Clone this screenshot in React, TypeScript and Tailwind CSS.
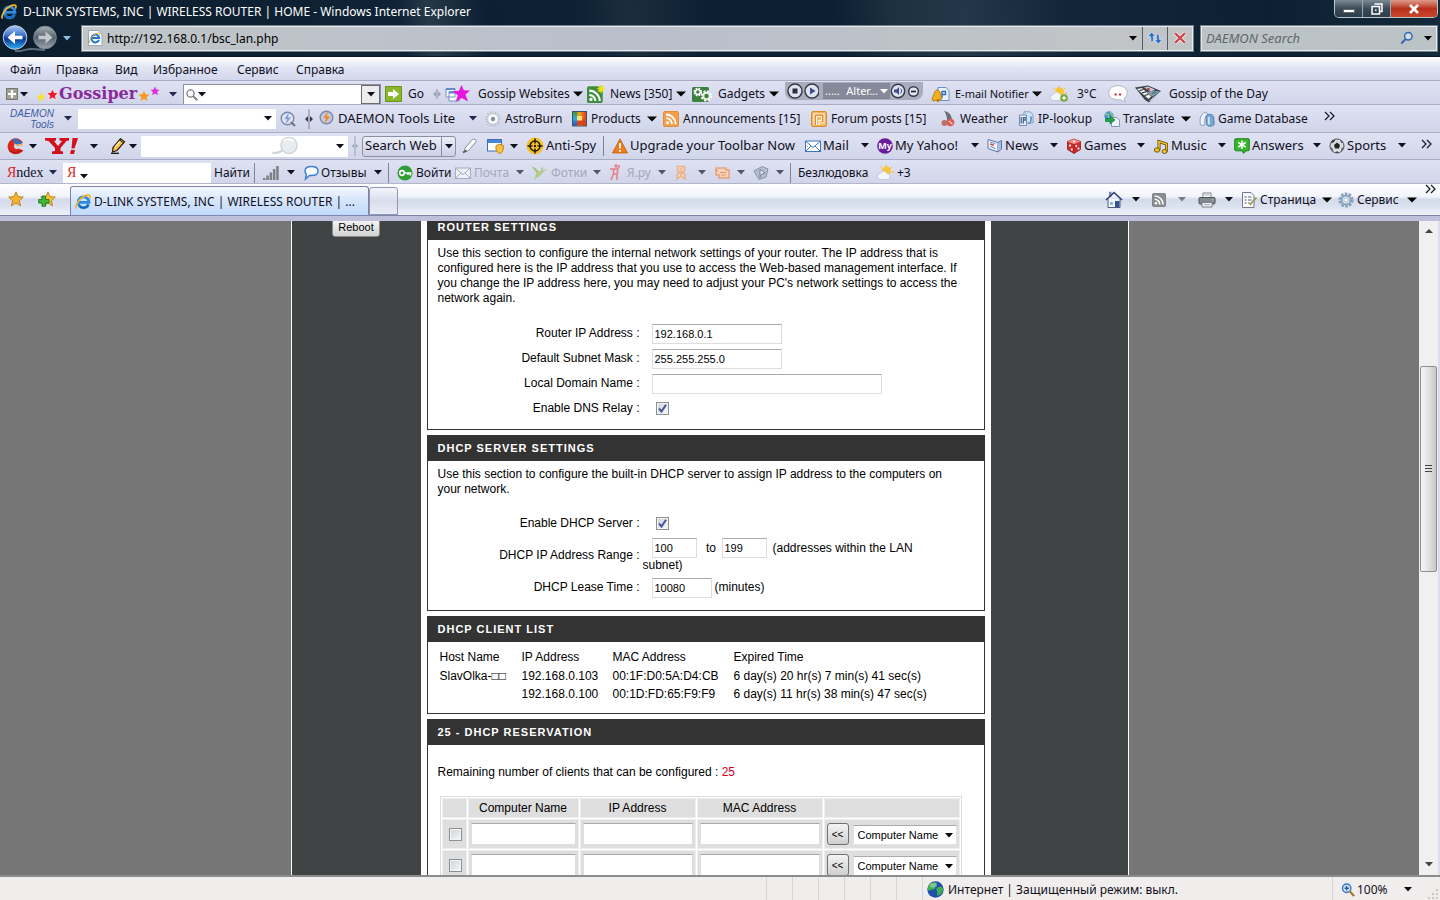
import type { ReactNode } from "react";

type Box = { c?: string; children?: ReactNode };

const star = "M8 0.8 10.1 5.6 15.3 6.1 11.4 9.6 12.6 14.8 8 12.1 3.4 14.8 4.6 9.6 0.7 6.1 5.9 5.6Z";

/* ---------- small building blocks ---------- */

function Caret({ c = "" }: { c?: string }) {
  return (
    <svg className={`h-[5px] w-2 shrink-0 ${c}`} viewBox="0 0 8 5" aria-hidden="true">
      <path d="M0 0H8L4 4.6Z" fill="currentColor" />
    </svg>
  );
}

function WideCaret({ c = "" }: { c?: string }) {
  return (
    <svg className={`h-1.5 w-2.5 shrink-0 ${c}`} viewBox="0 0 10 6" aria-hidden="true">
      <path d="M0 0.5H10L5 5.6Z" fill="#000" />
    </svg>
  );
}

function Item({ c = "", children }: Box) {
  return <button type="button" className={`flex shrink-0 items-center whitespace-nowrap ${c}`}>{children}</button>;
}

function Slot({ c = "", children }: Box) {
  return <span className={`flex shrink-0 items-center ${c}`}>{children}</span>;
}

function Sep() {
  return <span className="h-5 w-px shrink-0 bg-[#7d8296]" />;
}

function More({ c = "" }: { c?: string }) {
  return (
    <button type="button" aria-label="More" className={`shrink-0 ${c}`}>
      <svg className="h-2.5 w-[11px]" viewBox="0 0 11 10" fill="none" aria-hidden="true">
        <path d="M1 1 5 5 1 9M6 1 10 5 6 9" stroke="#1c1e2c" strokeWidth="1.3" />
      </svg>
    </button>
  );
}

function Icon({ c = "h-4 w-4", box = "0 0 16 16", children }: Box & { box?: string }) {
  return (
    <svg className={`shrink-0 ${c}`} viewBox={box} fill="none" aria-hidden="true">
      {children}
    </svg>
  );
}

/* ---------- icons ---------- */

function IeLogo({ c = "h-4 w-4" }: { c?: string }) {
  return (
    <Icon c={c}>
      <path d="M13.6 10.4A5.4 5.4 0 1 1 14 8.3H4.6" stroke="#2b8be0" strokeWidth="2.8" />
      <path d="M13.4 10.4A5.4 5.4 0 0 1 4 11.5" stroke="#1660b8" strokeWidth="1.4" />
      <path d="M1.6 14.6C-0.8 11.4 5.6 2.6 12 1.2 15 0.6 15.6 2.2 14.4 4.6" stroke="#f0b429" strokeWidth="1.7" />
    </Icon>
  );
}

function PageIe() {
  return (
    <Icon>
      <path d="M1.5 0.5H11L15 4V15.5H1.5Z" fill="#fff" stroke="#9aa7b5" />
      <path d="M12 9.8A3.9 3.9 0 1 1 12.2 8.1H5" stroke="#1f79d4" strokeWidth="2" />
      <path d="M2.6 13C1.6 10 6 4.2 11 3.2c2-.3 2 .8 1.4 2" stroke="#e8ab28" />
    </Icon>
  );
}

function NavButtons() {
  return (
    <svg className="h-7 w-14 shrink-0" viewBox="0 0 56 28" aria-hidden="true">
      <defs>
        <linearGradient id="back" x1="0" y1="0" x2="0" y2="1">
          <stop offset="0" stopColor="#a9c8f2" />
          <stop offset=".4" stopColor="#3f74cc" />
          <stop offset=".55" stopColor="#0a3490" />
          <stop offset="1" stopColor="#2fb4fa" />
        </linearGradient>
        <linearGradient id="fwd" x1="0" y1="0" x2="0" y2="1">
          <stop offset="0" stopColor="#a8afb6" />
          <stop offset=".5" stopColor="#59636d" />
          <stop offset="1" stopColor="#9aa3ab" />
        </linearGradient>
      </defs>
      <path d="M14 27C22 28 26 24 32 25L44 26" stroke="#5f6f7f" strokeWidth="2" fill="none" />
      <circle cx="14" cy="13.5" r="11.8" fill="url(#back)" stroke="#c3d2e4" />
      <circle cx="44" cy="13.5" r="11.3" fill="url(#fwd)" stroke="#7d8a96" />
      <path d="M6.5 13.500 14 7V11.800H21.500V15.200H14V20Z" fill="#fff" />
      <path d="M51.500 13.500 44.500 7.500V11.800H37.500V15.200H44.500V19.500Z" fill="#c3c9ce" />
    </svg>
  );
}

function Star({ fill, edge = "none", c = "h-4 w-4" }: { fill: string; edge?: string; c?: string }) {
  return (
    <Icon c={c}>
      <path d={star} fill={fill} stroke={edge} strokeWidth=".8" />
    </Icon>
  );
}

function Rss({ from, line = "#fff", c = "h-4 w-4" }: { from: string; line?: string; c?: string }) {
  return (
    <Icon c={c}>
      <rect x=".5" y=".5" width="15" height="15" rx="1.5" fill={from} stroke={line} />
      <circle cx="4.5" cy="11.7" r="1.5" fill="#fff" />
      <path d="M3 7.200A6 6 0 0 1 9 13.200M3 3.500A9.700 9.700 0 0 1 12.700 13.200" stroke="#fff" strokeWidth="1.8" />
    </Icon>
  );
}

function Envelope({ c = "h-4 w-4", tone = "#3b74c4", fill = "#fff" }: { c?: string; tone?: string; fill?: string }) {
  return (
    <Icon c={c}>
      <rect x=".5" y="3" width="15" height="10.5" fill={fill} stroke={tone} />
      <path d="M1 3.500 8 9.500 15 3.500M1 13 6 8M15 13 10 8" stroke={tone} />
    </Icon>
  );
}

function Lens({ color, c = "h-4 w-4" }: { color: string; c?: string }) {
  return (
    <Icon c={c}>
      <circle cx="9.5" cy="6" r="4.3" fill="#ffffff66" stroke={color} strokeWidth="1.6" />
      <path d="M6.300 9.300 1.500 14.300" stroke={color} strokeWidth="2.2" />
    </Icon>
  );
}

function GossipCards() {
  return (
    <Icon c="h-[18px] w-[26px]" box="0 0 26 18">
      <path d="M1 3.500H10V12H1Z M4 6.500H14V16H4Z" fill="#fff" stroke="#6f93c8" />
      <path d="M1 3.500H10V5H1Z M4 6.500H14V8.500H4Z" fill="#5c88c9" />
      <path d="M16.500 0 18.800 5.200 25 5.500 20.500 9.600 23 16.500 16.800 13 10.500 17 12.800 10.400 8 6.200 14 5.800Z" fill="#e815e0" />
    </Icon>
  );
}

function GreenNews() {
  return (
    <Icon c="h-[18px] w-[18px]">
      <rect y="1" width="14" height="15" rx="1.5" fill="#3d8f3d" />
      <circle cx="3.5" cy="12.8" r="1.5" fill="#fff" />
      <path d="M2 8.800a5.500 5.500 0 0 1 5.500 5.500M2 5a9.300 9.300 0 0 1 9.300 9.300" stroke="#fff" strokeWidth="1.8" />
      <path d="M12.500 0v7M9 3.500h7M10 1l5 5M15 1l-5 5" stroke="#f4e51c" strokeWidth="1.2" />
    </Icon>
  );
}

function Gadgets() {
  return (
    <Icon c="h-[17px] w-[21px]" box="0 0 21 17">
      <rect x="0" y="1" width="17" height="15" rx="1.5" fill="#3c8040" />
      <circle cx="5.8" cy="6" r="3.3" stroke="#fff" strokeWidth="2" strokeDasharray="1.7 .9" />
      <circle cx="5.8" cy="6" r="2.4" stroke="#fff" strokeWidth="1.4" />
      <circle cx="14.5" cy="10" r="4.7" stroke="#f4f8f0" strokeWidth="2.2" strokeDasharray="2.200 1.500" />
      <circle cx="14.5" cy="10" r="3.2" stroke="#e8f0e2" strokeWidth="2" />
    </Icon>
  );
}

function Bell() {
  return (
    <Icon c="h-[17px] w-[19px]" box="0 0 19 17">
      <path d="M7 1.500H15L18 4.500V14.500H7Z" fill="#e9f1fb" stroke="#6b8fc4" />
      <path d="M11 5v7M11 5.500h3.500v3H11" stroke="#3565ad" strokeWidth="1.3" />
      <path d="M1 12C4 10 2 5 6 4 10 4 9 9 11 13L2 15Z" fill="#f2b01e" stroke="#a86e07" strokeWidth=".8" />
      <circle cx="7" cy="14.5" r="1.5" fill="#c27c05" />
    </Icon>
  );
}

function SunCloud({ add = false }: { add?: boolean }) {
  return (
    <Icon c="h-4 w-[18px]" box="0 0 18 16">
      <circle cx="9.5" cy="6" r="4.5" fill="#fbc531" />
      <path d="M9 0v2M3.500 2l1.600 1.500M15 2l-1.500 1.500M17 7h-2" stroke="#f5b417" />
      <path d="M3.500 14.500a3 3 0 0 1 0-6C4.500 5.500 9 5.500 9.800 8.500c4-.4 4.500 6 .4 6Z" fill="#f3f6fb" stroke="#b9c3d2" strokeWidth=".8" />
      {add && (
        <>
          <circle cx="14" cy="12" r="3.8" fill="#6aa62c" />
          <path d="M14 9.800v4.400M11.800 12h4.400" stroke="#fff" strokeWidth="1.3" />
        </>
      )}
    </Icon>
  );
}

function ChatBubble() {
  return (
    <Icon c="h-[18px] w-5" box="0 0 20 18">
      <path d="M10 .7c5.300 0 9.200 3 9.200 7 0 2.600-1.400 4.600-3.200 5.700l1.500 3.800-5-2.500C5 15.600.8 12.300.8 7.700c0-4 3.900-7 9.200-7Z" fill="#fff" stroke="#aeb6c4" />
      <path d="M6.500 8.500h2.200v2H6.500ZM11 8.500h2.200v2H11Z" fill="#cf3038" />
    </Icon>
  );
}

function PaperStack() {
  return (
    <Icon c="h-[18px] w-7" box="0 0 28 18">
      <path d="M1 2.500 14 .5 27 6 15 17.500 11 15Z" fill="#3d424a" />
      <path d="M3 4 8 3 17 11.500 14.500 14Z" fill="#eef0f4" />
      <path d="M10 2.500 14 1.500 21 4.500 17 6.500Z" fill="#c9ced8" />
      <path d="M13 7 19 5.500 26 6.500 18 12Z" fill="#8f99a8" />
      <path d="M5.500 5.500l4-1M8 8l4-1.200M10.500 10.500l4-1.200" stroke="#222" />
      <path d="M13 3.500l3 1" stroke="#ca3434" strokeWidth="1.5" />
      <path d="M18 8.500l4-1.500" stroke="#2e8f86" strokeWidth="1.5" />
      <path d="M26 7.500 15.500 16" stroke="#dfe3e8" />
    </Icon>
  );
}

function Bolt({ lens = false }: { lens?: boolean }) {
  return (
    <Icon>
      <circle cx="7.5" cy="7.5" r="6.3" fill={lens ? "#dbe3f2" : "#c5c4dd"} stroke="#7c89ad" strokeWidth="1.4" />
      <path d="M8.800 1.500 4.500 8H7L5.500 13.500 11 6.500H8Z" fill={lens ? "#7f9fd6" : "#f18a1b"} />
      {lens && <path d="M11 11 15 15" stroke="#6c7686" strokeWidth="2.2" />}
    </Icon>
  );
}

function Burst() {
  return (
    <Icon>
      <path d="M8 0v16M0 8h16M2.300 2.300l11.400 11.400M13.700 2.300 2.300 13.700M5 .8l6 14.400M11 .8 5 15.200M.8 5l14.400 6M15.200 5 .8 11" stroke="#b4b8c4" strokeWidth="1.1" />
      <circle cx="8" cy="8" r="4.8" fill="#fff" stroke="#dfe2ea" />
      <circle cx="8" cy="8" r="2.3" fill="#8b93a2" />
    </Icon>
  );
}

function ProductsIcon() {
  return (
    <svg className="h-4 w-[15px] shrink-0" viewBox="0 0 15 16" aria-hidden="true">
      <defs>
        <linearGradient id="prodTop" x1="0" y1="0" x2="1" y2="0">
          <stop offset="0" stopColor="#3f9a3a" />
          <stop offset=".5" stopColor="#f3a31c" />
          <stop offset="1" stopColor="#d8361a" />
        </linearGradient>
        <linearGradient id="prodSide" x1="0" y1="0" x2="0" y2="1">
          <stop offset="0" stopColor="#3f9a3a" />
          <stop offset=".5" stopColor="#35a8d8" />
          <stop offset="1" stopColor="#2453b4" />
        </linearGradient>
      </defs>
      <rect x=".5" y=".5" width="14" height="14.5" fill="url(#prodTop)" stroke="#39537a" />
      <rect x="1" y="1" width="4" height="13.500" fill="url(#prodSide)" />
      <path d="M5 8.500H14V14.500H5Z" fill="#d8421c" />
      <path d="M5 5H10V9.500H5Z" fill="#fbe27a" />
    </svg>
  );
}

function ForumIcon() {
  return (
    <Icon>
      <rect x=".5" y=".5" width="15" height="15" rx="1.5" fill="#f6b565" stroke="#dd8a28" />
      <path d="M3 14V3H13V12H9M5.500 14V5.500H10.500V9.500H8V14" stroke="#fff4e2" strokeWidth="1.2" />
      <path d="M4.300 14V4.200H11.800V10.800" stroke="#d8791c" strokeWidth=".9" />
    </Icon>
  );
}

function ForecastIcon() {
  return (
    <Icon c="h-4 w-[15px]" box="0 0 15 16">
      <path d="M4 0C10 1 12 5 12 10L6 14C8 9 7 4 4 0Z" fill="#6a6d78" />
      <circle cx="4.5" cy="12" r="3" fill="#b8736e" />
      <circle cx="10.5" cy="11.5" r="3.8" fill="#dd5a52" />
      <path d="M9 9.800l3.500 3.500" stroke="#f6d8d6" strokeWidth="1.2" />
    </Icon>
  );
}

function IpIcon() {
  return (
    <Icon>
      <path d="M6 .8h6l3 2.700V12H6Z" fill="#cfe0f4" stroke="#7ea0cb" />
      <path d="M1.500 4H8.500V14.500H1.500Z" fill="#e6edf7" stroke="#6f8db5" />
      <path d="M3.200 6V12.500M5.300 12.500V6.500H7.200V9.200H5.300" stroke="#3f5e88" strokeWidth="1.200" />
      <path d="M12.500 5.500C14 8 13 11 10.500 13" stroke="#5c86c0" strokeWidth="1.500" />
    </Icon>
  );
}

function TranslateIcon() {
  return (
    <Icon>
      <circle cx="5" cy="5" r="4.7" fill="#4b90d8" />
      <path d="M1 3.500C4 2 6 5 4.500 9M6 .8C9 3 8 6 9.500 7" stroke="#8fd078" strokeWidth="1.5" />
      <path d="M7.500 6.500H13L15.500 9V15.500H7.500Z" fill="#eef3fa" stroke="#8298b8" />
      <path d="M1.500 7.500H6V5L11 9 6 13V10.500H1.500Z" fill="#1fa050" stroke="#0a6e30" strokeWidth=".6" />
    </Icon>
  );
}

function GameDbIcon() {
  return (
    <Icon>
      <path d="M2 14.500C-.5 9 2 2 7 1l2 3C6 5 5 10 6 14Z" fill="#eef2f8" stroke="#8b9ebb" />
      <path d="M7 5.500C7 2.500 13.500 2.500 14.500 5.500L15.200 13.500C13 15.700 9 15.700 7.500 13.500Z" fill="#7aa7d2" stroke="#4e7fae" />
      <path d="M9.800 6V13.500" stroke="#d4e6f6" strokeWidth="1.8" />
    </Icon>
  );
}

function Cleaner() {
  return (
    <Icon c="h-[18px] w-[18px]" box="0 0 18 18">
      <path d="M16 5.500C13 1 8 0 4.500 2.500-.5 6-.5 12.500 3.500 15.500 7.500 18.500 13 17.500 16.500 13.500L11.500 11.500C9 13 6.800 11.500 7 9 7.200 6.500 9 6 11 7Z" fill="#d9271d" />
      <path d="M5 2.300C9 .5 12 3 16 6L9.500 8.500C8 6 6 5 5 2.300Z" fill="#356fb5" />
      <path d="M3 5.500C6 6 9 7.500 10.500 9.500L16 8.500V6.500L11 7.500Z" fill="#f2b36a" />
      <path d="M2 13.500C6 16 10 16 15 13.500" stroke="#8f1410" />
    </Icon>
  );
}

function Pencil() {
  return (
    <Icon>
      <path d="M10.500 .8 14.500 3.800 7 12.500 2.500 14 3 9.500Z" fill="#f6c04c" stroke="#2a1c08" strokeWidth="1.200" />
      <path d="M5 9 10 3.200" stroke="#fff0c8" strokeWidth="1.200" />
      <path d="M9.500 2 13.500 5" stroke="#2a1c08" />
      <path d="M1 15.300H9" stroke="#111" strokeWidth="1.3" />
    </Icon>
  );
}

function Marker() {
  return (
    <Icon c="h-4 w-[15px]" box="0 0 15 16">
      <path d="M13 1.500C15 2.500 14 4 13 5L6.500 12.500 2.500 14 3 10 9.500 2.500C10.500 1.300 12 .8 13 1.500Z" fill="#fbfbfd" stroke="#878b98" />
      <path d="M1 14.500 4.500 12.500" stroke="#555" strokeWidth="1.8" />
    </Icon>
  );
}

function ShieldWindow() {
  return (
    <Icon c="h-4 w-[17px]" box="0 0 17 16">
      <rect x=".5" y="1.5" width="14" height="11.5" fill="#fff" stroke="#3d6fba" />
      <path d="M1 2H14V5H1Z" fill="#4b86d6" />
      <path d="M9 7.500 12.700 6.300 16.300 7.500V11C16 13.500 14.500 14.800 12.700 15.500 10.800 14.800 9.200 13.500 9 11Z" fill="#f6c042" stroke="#c48410" />
    </Icon>
  );
}

function Target() {
  return (
    <Icon c="h-[18px] w-[18px]" box="0 0 18 18">
      <circle cx="9" cy="9" r="8.5" fill="#f5c22b" />
      <circle cx="9" cy="9" r="5" stroke="#241c05" strokeWidth="1.5" />
      <path d="M9 1.500v5M9 11.500v5M1.500 9h5M11.500 9h5" stroke="#241c05" strokeWidth="1.5" />
      <circle cx="9" cy="9" r="1.2" fill="#241c05" />
    </Icon>
  );
}

function Warning() {
  return (
    <Icon>
      <path d="M8 .8 15.500 15H.5Z" fill="#ea7d19" stroke="#c55d0a" strokeWidth=".8" />
      <path d="M8 5v5.500M8 12v1.800" stroke="#fff" strokeWidth="1.8" />
    </Icon>
  );
}

function MyBadge() {
  return (
    <svg className="h-4 w-4 shrink-0" viewBox="0 0 16 16" aria-hidden="true">
      <circle cx="8" cy="8" r="7.800" fill="#6b1c9c" />
      <text x="8" y="11" textAnchor="middle" fontSize="9" fontWeight="700" fontFamily="Noto Sans, sans-serif" fill="#fff">My</text>
    </svg>
  );
}

function NewsSheet() {
  return (
    <Icon>
      <path d="M1 1.500 11 4.500V14L1 10.500Z" fill="#f3f6fc" stroke="#5873ab" />
      <path d="M11 4.500 14.500 2.500V11L11 14" fill="#a9bfe6" stroke="#5873ab" />
      <path d="M3 4l5.500 1.700M3 8.500l5.500 2" stroke="#7a90bd" />
      <path d="M3 6l4 1.300" stroke="#c65050" strokeWidth="1.5" />
    </Icon>
  );
}

function Dice() {
  return (
    <Icon>
      <path d="M8 1 14.500 3.500V11.500L8 15.500 1.500 11.500V3.500Z" fill="#cf2f2f" stroke="#8e1919" strokeWidth=".8" />
      <path d="M8 1 14.500 3.500 8 6 1.500 3.500Z" fill="#f08d86" />
      <path d="M8 6V15.500" stroke="#8e1919" strokeWidth=".8" />
      <circle cx="4" cy="7.5" r="1.1" fill="#fff" />
      <circle cx="5.8" cy="11.5" r="1.1" fill="#fff" />
      <circle cx="10.2" cy="8" r="1" fill="#fff" />
      <circle cx="12.5" cy="10.5" r="1" fill="#fff" />
      <circle cx="8" cy="3.5" r="1.1" fill="#fff" />
    </Icon>
  );
}

function Note() {
  return (
    <Icon>
      <path d="M6 12V3.500L13.500 6V13.500" stroke="#5b4300" strokeWidth="3" />
      <path d="M6 12V3.500L13.500 6V13.500" stroke="#f0c22c" strokeWidth="1.6" />
      <ellipse cx="4" cy="12" rx="2.7" ry="2.2" fill="#f0c22c" stroke="#5b4300" strokeWidth=".8" />
      <ellipse cx="11.5" cy="13.5" rx="2.5" ry="2" fill="#f0c22c" stroke="#5b4300" strokeWidth=".8" />
    </Icon>
  );
}

function AnswersIcon() {
  return (
    <Icon>
      <path d="M2 .7H14A1.300 1.300 0 0 1 15.300 2V11.500A1.300 1.300 0 0 1 14 12.800H12L9.500 15.500 8.500 12.800H2A1.300 1.300 0 0 1 .7 11.500V2A1.300 1.300 0 0 1 2 .7Z" fill="#38b52c" stroke="#1e8416" />
      <path d="M8 2.500v8.500M4.300 4.500l7.400 4.500M11.700 4.500 4.300 9" stroke="#fff" strokeWidth="1.5" />
    </Icon>
  );
}

function Ball() {
  return (
    <Icon>
      <circle cx="8" cy="8" r="7" fill="#d9dbe0" stroke="#4f5157" />
      <path d="M8 4.500 11 7 10 10.500H6L5 7Z" fill="#222" />
      <path d="M3 2.500 6.500 1.500 5 4 2 5.500ZM11 1.500 14 4.500 12.500 5ZM1.300 9 3.500 10.500 4 13.500ZM14.700 9 12.500 10.500 12 13.500ZM6.500 14.800 8 13 9.500 14.800Z" fill="#333" />
    </Icon>
  );
}

function SignalBars() {
  return (
    <Icon>
      <path d="M0 13h2.500v2H0ZM3.300 10.500h2.500V15H3.300ZM6.600 7.500h2.500V15H6.600ZM9.900 4h2.500v11H9.900ZM13.200 1h2.500v14h-2.500Z" fill="#7e8087" />
    </Icon>
  );
}

function Speech() {
  return (
    <Icon>
      <path d="M8.500 1.500c4 0 6.500 1.700 6.500 4.500s-2.500 4.600-6.500 4.600c-.8 0-1.500 0-2-.2L2.500 14l.8-4.800C2.300 8.400 2 7.200 2 6c0-2.800 2.500-4.500 6.500-4.500Z" fill="#f7fbff" stroke="#3f7fd6" strokeWidth="1.5" />
    </Icon>
  );
}

function KeyBadge() {
  return (
    <Icon>
      <circle cx="8" cy="8" r="7.6" fill="#2f9e37" />
      <circle cx="5" cy="8" r="2.3" stroke="#fff" strokeWidth="1.7" />
      <path d="M7.500 8H13.500V10.500M11 8V10" stroke="#fff" strokeWidth="1.7" />
    </Icon>
  );
}

function Hummingbird() {
  return (
    <Icon>
      <path d="M0 1.500 3.500 3 7 6.500 15.500 3.500 11 7.500 8 11 5 12.500 1.500 15 3.500 11 4 7.500Z" fill="#a9cf8a" />
      <path d="M6 6.500 10 6 7 10Z" fill="#e8b48c" />
      <path d="M1 2 5.500 7M11 2.500l-2 3" stroke="#8ab86a" />
    </Icon>
  );
}

function RunningMan() {
  return (
    <Icon c="h-[17px] w-[11px]" box="0 0 11 17">
      <circle cx="7" cy="2" r="1.7" fill="#e6808a" />
      <path d="M1 5H8.500V10M4.500 5V10L2 16M5 10H8V16M10.500 1 8.500 6" stroke="#e6808a" strokeWidth="1.6" />
    </Icon>
  );
}

function RibbonIcon() {
  return (
    <Icon c="h-4 w-2.5" box="0 0 10 16">
      <path d="M1.500 1.500H8.500V6.500H1.500ZM1 14V9.500L5 7 9 9.500V14L5 11Z" fill="#f7d9c4" stroke="#ecb18b" strokeWidth="1.5" />
      <path d="M3.500 4h3M5 8v2.500" stroke="#e69a68" />
    </Icon>
  );
}

function StackIcon() {
  return (
    <Icon>
      <path d="M2 3H12V5H15V13H5V10H2Z" fill="#f5d2b8" stroke="#e6a27b" strokeWidth="1.5" />
      <path d="M6 7.500h6M7 10h5M1 5.500h3" stroke="#e39566" />
    </Icon>
  );
}

function TagIcon() {
  return (
    <Icon>
      <path d="M1 6 9 1.500 15 4 13 12 6 14.500Z" fill="#b5bed0" stroke="#8592ab" />
      <path d="M7 4.500 12 8 8 9.500 7 12.500Z" fill="#eef1f7" stroke="#76839d" />
    </Icon>
  );
}

function AddFavorite() {
  return (
    <Icon c="h-4 w-[18px]" box="0 0 18 16">
      <path d={star} transform="translate(2 0)" fill="#f6bd2c" stroke="#a9771a" strokeWidth=".8" />
      <path d="M4 5H7.500V8.500H11V12H7.500V15.300H4V12H.7V8.500H4Z" fill="#45b53a" stroke="#1c7a1a" strokeWidth=".9" />
    </Icon>
  );
}

function Home() {
  return (
    <Icon c="h-[18px] w-[18px]" box="0 0 18 18">
      <path d="M3 8V16.500H15V8" fill="#f5f7fa" stroke="#4d5a7c" />
      <path d="M4 .8H6.500V6H4Z" fill="#7a86a8" />
      <path d="M1 9 9 1.500 17 9" stroke="#2c3c7c" strokeWidth="1.6" />
      <path d="M5 11H8V14H5Z" fill="#7fb8ee" />
      <path d="M10 10H14.500V16.500H10Z" fill="#38518e" />
    </Icon>
  );
}

function Printer() {
  return (
    <Icon c="h-4 w-[18px]" box="0 0 18 16">
      <path d="M5 6V1H13V6" fill="#fff" stroke="#7a7f89" />
      <rect x="1" y="5.5" width="16" height="6.5" rx="1" fill="#83878f" stroke="#4f535b" />
      <path d="M4 10.500H14V15H4Z" fill="#f5f5f5" stroke="#7a7f89" />
      <path d="M6.500 3h5M6 12.700h6" stroke="#9aa" />
      <circle cx="14.5" cy="7.7" r=".9" fill="#7fe27f" />
    </Icon>
  );
}

function PageEdit() {
  return (
    <Icon>
      <path d="M1.500.5H10L13 3.500V15.500H1.500Z" fill="#fdfdfd" stroke="#6e7889" />
      <path d="M3.500 5h2M7 5h3.500M3.500 8h2M7 8h3.500M3.500 11h2M7 11h2" stroke="#55617a" strokeWidth="1.2" />
      <path d="M15.500 5.500 10 11.500 9 13" stroke="#9a9a52" strokeWidth="1.8" />
    </Icon>
  );
}

function Gear() {
  return (
    <Icon>
      <circle cx="8" cy="8" r="6.3" stroke="#8aa3bd" strokeWidth="2.6" strokeDasharray="2.600 1.350" />
      <circle cx="8" cy="8" r="4.5" fill="#e9eff6" stroke="#8aa3bd" strokeWidth="2" />
      <circle cx="8" cy="8" r="2.200" fill="#fff" stroke="#9fb3c8" />
    </Icon>
  );
}

function Globe() {
  return (
    <Icon c="h-[17px] w-[17px]">
      <circle cx="8" cy="8" r="7.7" fill="#1d4fb0" />
      <path d="M2 4C4 .8 8 .5 9.500 2 9 4 7 4.500 7.500 7 6 9 3.500 7 2 9.500 0 8 .5 5.500 2 4ZM10 6C12 4.500 14 5 15.300 7 15 10 13 13.500 10 14 8.500 12 10.500 11 9 9 8.500 7.500 9 6.500 10 6Z" fill="#3fae4c" />
      <ellipse cx="6" cy="4" rx="3.5" ry="2.2" fill="#ffffff55" />
    </Icon>
  );
}

/* ---------- browser chrome ---------- */

function TitleBar() {
  return (
    <header className="flex h-[57px] shrink-0 flex-col border-b border-[#0a1622] bg-[linear-gradient(80deg,#0c1d2e_0%,#0f2336_28%,#24394a_30%,#0d2033_34%,#0d2034_40%,#1b2d3d_44%,#0d1f33_49%,#0d1f33_58%,#1c3040_62%,#24374a_67%,#12263a_74%,#0d2033_88%,#132a3a_100%)] text-white">
      <div className="flex h-6 items-start">
        <IeLogo c="mt-1 h-4 w-[18px]" />
        <h1 className="ml-[5px] pt-1 text-xs leading-4">D-LINK SYSTEMS, INC | WIRELESS ROUTER | HOME - Windows Internet Explorer</h1>
        <div className="mr-0.5 ml-auto flex h-[18px] overflow-hidden rounded-b-[5px] border border-t-0 border-[#b9c4cc]">
          <button type="button" aria-label="Minimize" className="flex w-7 items-center justify-center border-r border-[#9aa7b1] bg-linear-to-b from-[#7d8a95] via-[#3b4c5a] to-[#2b3c4a]">
            <span className="mt-1 h-1 w-3 border border-[#666] bg-white" />
          </button>
          <button type="button" aria-label="Restore" className="flex w-7 items-center justify-center border-r border-[#9aa7b1] bg-linear-to-b from-[#7d8a95] via-[#3b4c5a] to-[#2b3c4a]">
            <Icon c="h-3 w-3" box="0 0 12 12">
              <path d="M3.500 1H11V8.500H9M1 3.500H8.500V11H1Z" stroke="#fff" strokeWidth="1.5" />
              <path d="M4 6.500h1.500V8H4Z" fill="#fff" />
            </Icon>
          </button>
          <button type="button" aria-label="Close" className="flex w-[46px] items-center justify-center bg-linear-to-b from-[#dd9a88] via-[#b8301c] to-[#c8472c]">
            <Icon c="h-2.5 w-3" box="0 0 12 10">
              <path d="M2 1 10 9M10 1 2 9" stroke="#fff" strokeWidth="2.6" />
            </Icon>
          </button>
        </div>
      </div>
      <div className="flex h-7 items-center pr-0.5 pl-px">
        <NavButtons />
        <Slot c="ml-1.5 w-[18px] text-[#8fc1e6]"><Caret /></Slot>
        <div className="flex h-[27px] flex-1 items-center border-2 border-[#71808a] bg-linear-to-r from-[#c0c5c8] via-[#b9c0cb] to-[#c2c5c6] text-black outline-1 -outline-offset-2 outline-[#e6eaec]">
          <Slot c="ml-1 w-5"><PageIe /></Slot>
          <input aria-label="Address" defaultValue="http://192.168.0.1/bsc_lan.php" className="h-5 min-w-0 flex-1 bg-transparent text-xs outline-none" />
          <Item c="w-[13px]"><Caret /></Item>
          <Item c="h-full w-[25px] justify-center border-l border-[#4f5d68]">
            <Icon>
              <path d="M4 12.500C6.500 12 7 9.500 6 6.500H8.500L4.500 2 1 6.500H3.500C4 9 4 11 4 12.500Z" fill="#2b6cc4" stroke="#eef4fb" strokeWidth=".6" />
              <path d="M12 3.500C9.500 4 9 6.500 10 9.500H7.500L11.500 14 15 9.500H12.500C12 7 12 5 12 3.500Z" fill="#2b6cc4" stroke="#eef4fb" strokeWidth=".6" />
            </Icon>
          </Item>
          <Item c="h-full w-[25px] justify-center border-l border-[#4f5d68]">
            <Icon c="h-3.5 w-3.5">
              <path d="M2.500 2.500 13.500 13.500M13.500 2.500 2.500 13.500" stroke="#f7e6e6" strokeWidth="4.5" />
              <path d="M2.500 2.500 13.500 13.500M13.500 2.500 2.500 13.500" stroke="#c9444a" strokeWidth="2.6" />
            </Icon>
          </Item>
        </div>
        <div className="ml-1.5 flex h-[27px] w-[238px] items-center border-2 border-[#71808a] bg-[#bcc3c7] text-black outline-1 -outline-offset-2 outline-[#e6eaec]">
          <input aria-label="Search" placeholder="DAEMON Search" className="ml-1 h-5 min-w-0 flex-1 bg-transparent text-[13px] italic outline-none placeholder:text-[#5f666b]" />
          <Lens color="#2f66b4" c="mr-2.5 h-3.5 w-3.5" />
          <Caret c="mr-1" />
        </div>
      </div>
    </header>
  );
}

function MenuBar() {
  return (
    <nav className="flex h-6 shrink-0 items-center border-b border-[#a9abc4] bg-linear-to-b from-white via-[#dfe3f3] to-[#d3d7ec] pt-0.5 pl-2.5 text-xs">
      <a href="#file" className="w-[46px]">Файл</a>
      <a href="#edit" className="w-[59px]">Правка</a>
      <a href="#view" className="w-[38px]">Вид</a>
      <a href="#favorites" className="w-[84px]">Избранное</a>
      <a href="#tools" className="w-[59px]">Сервис</a>
      <a href="#help">Справка</a>
    </nav>
  );
}

function Player() {
  return (
    <div className="mr-2 -mt-0.5 flex h-[18px] w-[138px] shrink-0 items-center self-start rounded-b-[8px] bg-[#a9adbb] pl-0.5 text-white">
      <Icon c="h-4 w-8" box="0 0 32 16">
        <circle cx="8" cy="8" r="7" fill="#dfe3f0" stroke="#33384a" strokeWidth="1.4" />
        <path d="M5.500 5.500h5v5h-5Z" fill="#2a3045" />
        <circle cx="25" cy="8" r="7" fill="#dfe3f0" stroke="#33384a" strokeWidth="1.4" />
        <path d="M23 4.500 28.500 8 23 11.500Z" fill="#3d4d8a" />
      </Icon>
      <button type="button" className="ml-1 flex h-4 w-[67px] items-center bg-[#85899a] px-0.5 text-[11px] leading-4">
        <span>.....</span>
        <span className="ml-auto">Alter...</span>
        <Caret c="ml-0.5" />
      </button>
      <Icon c="h-4 w-[30px]" box="0 0 30 16">
        <circle cx="8" cy="8" r="6.7" fill="#dfe3f0" stroke="#33384a" strokeWidth="1.4" />
        <path d="M4 6.500H6.500L9 4V12L6.500 9.500H4Z" fill="#3d4d8a" />
        <path d="M10.500 5.500C12 7 12 9 10.500 10.500" stroke="#3d4d8a" />
        <circle cx="23.5" cy="8.5" r="4.8" fill="#dfe3f0" stroke="#33384a" strokeWidth="1.4" />
        <path d="M21 8.500h5" stroke="#222" strokeWidth="1.6" />
      </Icon>
    </div>
  );
}

function GossiperBar() {
  return (
    <div className="flex h-6 shrink-0 items-center overflow-hidden border-b border-[#a9abc4] bg-linear-to-b from-[#dfe2f2] to-[#d1d5ea] pt-[3px] pl-1.5">
      <Item c="mr-2 w-[22px]">
        <Icon c="h-3 w-3" box="0 0 12 12">
          <rect x=".5" y=".5" width="11" height="11" fill="#a0a093" stroke="#77776d" />
          <path d="M6 2v8M2 6h8" stroke="#fff" strokeWidth="2.2" />
        </Icon>
        <Caret c="ml-auto" />
      </Item>
      <Item c="mr-1.5 w-[141px]">
        <Star fill="#f7e230" c="mt-1.5 h-2.5 w-2.5" />
        <Star fill="#ee1c25" edge="#fff" c="h-[13px] w-[13px]" />
        <span className="font-['DejaVu_Serif',serif] text-base leading-[18px] font-bold text-[#8a2a9c]">Gossiper</span>
        <Star fill="#f59a1d" c="mt-1 ml-px h-3 w-3" />
        <Star fill="#dd2be0" c="mb-1.5 h-2.5 w-2.5" />
        <Caret c="ml-auto text-[#1f2a4d]" />
      </Item>
      <div className="mr-1 flex h-5 w-[198px] shrink-0 items-center self-end border border-b-0 border-[#8c90a0] bg-white">
        <Icon c="ml-0.5 h-3 w-3">
          <circle cx="6" cy="6" r="4.8" stroke="#7c7f86" strokeWidth="1.8" />
          <path d="M9.500 9.500 15 15" stroke="#7c7f86" strokeWidth="2.5" />
        </Icon>
        <Caret />
        <input aria-label="Gossiper search" className="min-w-0 flex-1 bg-transparent text-xs outline-none" />
        <button type="button" aria-label="History" className="flex h-full w-[19px] items-center justify-center border border-[#6c6c6c] bg-[#ececf0]"><Caret /></button>
      </div>
      <Item c="mr-2 w-10 gap-1.5">
        <Icon c="h-4 w-[17px]" box="0 0 17 16">
          <rect x=".5" y=".5" width="16" height="15" fill="#8bb62d" stroke="#6c9418" />
          <path d="M3 6H8V3L14 8 8 13V10H3Z" fill="#fff" />
        </Icon>
        Go
      </Item>
      <Icon c="mr-1 h-2.5 w-2" box="0 0 8 10">
        <path d="M3 2V8L0 5ZM5 2V8L8 5Z" fill="#9ea2b4" />
        <path d="M4 0v10" stroke="#8d91a4" />
      </Icon>
      <Item c="mr-1 w-[138px]"><Slot c="w-[33px]"><GossipCards /></Slot>Gossip Websites<WideCaret c="ml-auto" /></Item>
      <Item c="mr-1.5 w-[99px]"><Slot c="w-[23px]"><GreenNews /></Slot>News [350]<WideCaret c="ml-auto" /></Item>
      <Item c="mr-1.5 w-[87px]"><Slot c="w-[26px]"><Gadgets /></Slot>Gadgets<WideCaret c="ml-auto" /></Item>
      <Player />
      <Item c="mr-2 w-[111px] text-[11px]"><Slot c="w-6"><Bell /></Slot>E-mail Notifier<WideCaret c="ml-auto" /></Item>
      <Item c="mr-2 w-[50px]"><Slot c="w-[27px]"><SunCloud add /></Slot>3°C</Item>
      <Item c="mr-1.5 w-5"><ChatBubble /></Item>
      <Item><Slot c="w-[35px]"><PaperStack /></Slot>Gossip of the Day</Item>
    </div>
  );
}

function DaemonBar() {
  return (
    <div className="flex h-7 shrink-0 items-center overflow-hidden border-b border-[#a9abc4] bg-linear-to-b from-[#dfe2f2] to-[#d1d5ea] pl-2.5">
      <Item c="mr-1.5 w-[62px] text-[#3b5ba0]">
        <span className="flex flex-col items-end font-['Liberation_Sans',Arial,sans-serif] text-[10px] leading-[11px] italic"><span>DAEMON</span><span>Tools</span></span>
        <Caret c="ml-auto text-[#1f2a4d]" />
      </Item>
      <div className="mr-1 flex h-5 w-[198px] shrink-0 items-center bg-white">
        <input aria-label="DAEMON Tools search" className="min-w-0 flex-1 bg-transparent px-1 text-xs outline-none" />
        <Caret c="mr-1" />
      </div>
      <Item c="mr-2 w-[17px]"><Bolt lens /></Item>
      <Icon c="mr-1.5 h-5 w-2" box="0 0 8 20">
        <path d="M4 0v20" stroke="#7d8296" />
        <path d="M3 7V13L0 10ZM5 7V13L8 10Z" fill="#333a50" />
      </Icon>
      <Item c="mr-2 w-[158px] text-[13px]"><Slot c="w-[19px]"><Bolt /></Slot>DAEMON Tools Lite<Caret c="ml-auto text-[#1f2a4d]" /></Item>
      <Item c="w-[87px]"><Slot c="w-5"><Burst /></Slot>AstroBurn</Item>
      <Item c="mr-1.5 w-[85px]"><Slot c="w-[19px]"><ProductsIcon /></Slot>Products<WideCaret c="ml-auto" /></Item>
      <Item c="w-[148px]"><Slot c="w-5"><Rss from="#f3a04c" line="#e08f35" /></Slot>Announcements [15]</Item>
      <Item c="w-[129px]"><Slot c="w-5"><ForumIcon /></Slot>Forum posts [15]</Item>
      <Item c="w-[78px]"><Slot c="w-5"><ForecastIcon /></Slot>Weather</Item>
      <Item c="w-[86px]"><Slot c="w-5"><IpIcon /></Slot>IP-lookup</Item>
      <Item c="mr-2 w-[87px]"><Slot c="w-[19px]"><TranslateIcon /></Slot>Translate<WideCaret c="ml-auto" /></Item>
      <Item c="w-[125px]"><Slot c="w-[19px]"><GameDbIcon /></Slot>Game Database</Item>
      <More c="mb-1.5" />
    </div>
  );
}

function YahooBar() {
  return (
    <div className="flex h-[27px] shrink-0 items-center overflow-hidden border-b border-[#a9abc4] bg-linear-to-b from-[#dfe2f2] to-[#d1d5ea] pl-[7px] text-[13px]">
      <Item c="mr-2 w-[30px]"><Cleaner /><Caret c="ml-auto" /></Item>
      <Item c="mr-3 w-[53px]">
        <Icon c="h-[18px] w-[34px]" box="0 0 34 18">
          <path d="M0 1H11V3.500L9 4 13 9 17 4 14.500 3.500V1H24V3.500L21.500 4 15.500 11V14L18 14.500V17H7V14.500L10 14V11L3.500 4 0 3.500Z" fill="#d4101c" />
          <path d="M27.500 1H33L29.500 11.500H26.500ZM26 13H30L29 17H25Z" fill="#d4101c" />
        </Icon>
        <Caret c="ml-auto" />
      </Item>
      <Item c="mr-1 w-[27px]"><Pencil /><Caret c="ml-auto" /></Item>
      <div className="mr-1 flex h-[21px] w-[207px] shrink-0 items-center bg-white">
        <input aria-label="Yahoo search" className="min-w-0 flex-1 bg-transparent px-1 text-xs outline-none" />
        <Icon c="mr-9 h-[18px] w-7" box="0 0 28 18">
          <circle cx="17" cy="8.5" r="8" fill="#e8ecee" stroke="#cfd6d9" strokeWidth="1.5" />
          <path d="M12 4C14 1.500 19 1.500 21.500 4" stroke="#fff" strokeWidth="2" />
          <path d="M10.500 13C8 16 4 16 .5 16" stroke="#cfd6d9" strokeWidth="2.5" />
        </Icon>
        <Caret c="mr-1" />
      </div>
      <Icon c="mr-1 h-5 w-1.5" box="0 0 6 20">
        <path d="M3 0v20" stroke="#9aa0b4" />
        <path d="M2 8V12L0 10ZM4 8V12L6 10Z" fill="#9aa0b4" />
      </Icon>
      <div className="mr-1.5 flex h-[21px] w-[94px] shrink-0 items-stretch rounded-[3px] border border-[#8b90a6] bg-linear-to-b from-[#eceef8] to-[#ccd0e4]">
        <button type="button" className="flex flex-1 items-center pl-0.5 whitespace-nowrap">Search Web</button>
        <button type="button" aria-label="Search options" className="flex w-[14px] items-center justify-center border-l border-[#8b90a6]"><Caret /></button>
      </div>
      <Item c="mr-2 w-[17px]"><Marker /></Item>
      <Item c="mr-2 w-[31px]"><ShieldWindow /><Caret c="ml-auto" /></Item>
      <Item c="w-[77px]"><Slot c="w-5"><Target /></Slot>Anti-Spy</Item>
      <Sep />
      <Item c="ml-2 w-[193px]"><Slot c="w-[18px]"><Warning /></Slot>Upgrade your Toolbar Now</Item>
      <Item c="mr-2 w-[64px]"><Slot c="w-[18px]"><Envelope /></Slot>Mail<Caret c="ml-auto" /></Item>
      <Item c="mr-2 w-[102px]"><Slot c="w-[18px]"><MyBadge /></Slot>My Yahoo!<Caret c="ml-auto" /></Item>
      <Item c="mr-2 w-[71px]"><Slot c="w-[18px]"><NewsSheet /></Slot>News<Caret c="ml-auto" /></Item>
      <Item c="mr-2 w-[79px]"><Slot c="w-[18px]"><Dice /></Slot>Games<Caret c="ml-auto" /></Item>
      <Item c="mr-2 w-[73px]"><Slot c="w-[18px]"><Note /></Slot>Music<Caret c="ml-auto" /></Item>
      <Item c="mr-2 w-[87px]"><Slot c="w-[18px]"><AnswersIcon /></Slot>Answers<Caret c="ml-auto" /></Item>
      <Item c="w-[77px]"><Slot c="w-[18px]"><Ball /></Slot>Sports<Caret c="ml-auto" /></Item>
      <More c="mr-2 mb-1 ml-auto" />
    </div>
  );
}

function YandexBar() {
  return (
    <div className="flex h-6 shrink-0 items-center overflow-hidden border-b border-[#b4b7cc] bg-linear-to-b from-[#dfe2f2] to-[#d1d5ea] pt-0.5 pl-[7px]">
      <Item c="mr-1.5 w-[50px]">
        <span className="font-['Liberation_Serif',serif] text-sm leading-5"><span className="text-[#e0201b]">Я</span>ndex</span>
        <Caret c="ml-auto text-[#1f2a4d]" />
      </Item>
      <div className="mr-[3px] flex h-5 w-[148px] shrink-0 items-center gap-1 bg-white pl-1">
        <span className="font-['Liberation_Serif',serif] text-sm leading-5 text-[#e0201b]">Я</span>
        <Caret c="mt-2" />
        <input aria-label="Yandex search" className="min-w-0 flex-1 bg-transparent text-xs outline-none" />
      </div>
      <Item c="w-10">Найти</Item>
      <Sep />
      <Item c="mr-2 ml-2 w-8"><SignalBars /><Caret c="ml-auto" /></Item>
      <Item c="mr-1.5 w-[79px]"><Slot c="w-[18px]"><Speech /></Slot>Отзывы<Caret c="ml-auto" /></Item>
      <Sep />
      <Item c="ml-2 w-[58px]"><Slot c="w-[19px]"><KeyBadge /></Slot>Войти</Item>
      <Item c="mr-2 w-[69px] text-[#a3a7b8]"><Slot c="w-[19px]"><Envelope tone="#a6acbe" fill="#eef0f7" /></Slot>Почта<Caret c="ml-auto text-[#4f566c]" /></Item>
      <Item c="mr-2 w-[69px] text-[#a3a7b8]"><Slot c="w-[19px]"><Hummingbird /></Slot>Фотки<Caret c="ml-auto text-[#4f566c]" /></Item>
      <Item c="mr-2.5 w-[57px] text-[#a3a7b8]"><Slot c="w-[18px]"><RunningMan /></Slot>Я.ру<Caret c="ml-auto text-[#4f566c]" /></Item>
      <Item c="mr-2 w-[30px]"><RibbonIcon /><Caret c="ml-auto text-[#4f566c]" /></Item>
      <Item c="mr-2 w-[31px]"><StackIcon /><Caret c="ml-auto text-[#4f566c]" /></Item>
      <Item c="mr-1.5 w-[31px]"><TagIcon /><Caret c="ml-auto text-[#4f566c]" /></Item>
      <Sep />
      <Item c="ml-[7px] w-[79px]">Безлюдовка</Item>
      <Item><Slot c="w-5"><SunCloud /></Slot>+3</Item>
    </div>
  );
}

function TabBar() {
  return (
    <div className="shrink-0 border-b-5 border-[#bfc1dc] bg-[#bfc1dc]">
      <div className="flex h-8 items-end border-b border-[#7e86ad] bg-[linear-gradient(#ffffff_0%,#f1f4fa_40%,#d3daea_50%,#dde3f0_75%,#eef3fa_100%)] pl-2">
        <Item c="mr-3.5 mb-2"><Star fill="#f6b32b" edge="#a9771a" /></Item>
        <Item c="mr-3.5 mb-2"><AddFavorite /></Item>
        <button type="button" className="flex h-[29px] w-[299px] items-center rounded-t-[3px] border border-b-0 border-[#7c84a2] bg-linear-to-b from-[#f4f8ff] via-[#d5e4fb] to-[#c0dafb] pt-0.5 pl-1 text-xs">
          <Slot c="w-[19px]"><IeLogo /></Slot>
          <span className="truncate">D-LINK SYSTEMS, INC | WIRELESS ROUTER | ...</span>
        </button>
        <button type="button" aria-label="New tab" className="h-7 w-[29px] rounded-t-[3px] border border-[#8f96b2] bg-linear-to-b from-[#f3f5fb] via-[#d9deed] to-[#e9edf6]" />
        <div className="ml-auto flex h-full items-center">
          <Item c="mr-3 w-[35px]"><Home /><Caret c="ml-auto" /></Item>
          <Item c="mr-3 w-[34px]"><Rss from="#8a8c90" line="#777a80" c="h-3.5 w-3.5" /><Caret c="ml-auto text-[#7b7f8c]" /></Item>
          <Item c="mr-2 w-[35px]"><Printer /><Caret c="ml-auto" /></Item>
          <Item c="mr-1.5 w-[91px]"><Slot c="w-[19px]"><PageEdit /></Slot>Страница<WideCaret c="ml-auto" /></Item>
          <Item c="w-[79px]"><Slot c="w-[19px]"><Gear /></Slot>Сервис<WideCaret c="ml-auto" /></Item>
          <More c="mr-1 ml-2 self-start" />
        </div>
      </div>
    </div>
  );
}

/* ---------- router page ---------- */

function Panel({ title, c = "", children }: Box & { title: string }) {
  return (
    <section className={`border border-[#333] bg-white ${c}`}>
      <h2 className="flex h-[25px] items-center bg-[#333] pl-2.5 text-[11px] font-bold tracking-[1px] text-white uppercase">{title}</h2>
      {children}
    </section>
  );
}

function Field({ id, label, c = "h-[25px] items-center", children }: Box & { id: string; label: string }) {
  return (
    <div className={`flex ${c}`}>
      <label htmlFor={id} className="w-[212px] shrink-0 text-right">{label} :</label>
      {children}
    </div>
  );
}

const inputLook = "h-5 border border-[#ddd] border-t-[#aaa] bg-white text-[11px] outline-none";

function Check({ id, on = false, label }: { id: string; on?: boolean; label?: string }) {
  return (
    <span className="grid h-[13px] w-[13px] shrink-0 place-items-center">
      <input id={id} type="checkbox" aria-label={label} defaultChecked={on} className="peer col-start-1 row-start-1 h-[13px] w-[13px] appearance-none border border-[#8a8f94] bg-linear-to-br from-[#cdd1d8] to-[#f8f8f8] outline-1 -outline-offset-2 outline-[#f4f4f4]" />
      <svg className="pointer-events-none invisible col-start-1 row-start-1 h-[9px] w-[9px] peer-checked:visible" viewBox="0 0 9 9" fill="none" aria-hidden="true">
        <path d="M1 4.500 3.500 7.500 8 .8" stroke="#44549a" strokeWidth="2" />
      </svg>
    </span>
  );
}

const clients = [
  ["SlavOlka-□□", "192.168.0.103", "00:1F:D0:5A:D4:CB", "6 day(s) 20 hr(s) 7 min(s) 41 sec(s)"],
  ["", "192.168.0.100", "00:1D:FD:65:F9:F9", "6 day(s) 11 hr(s) 38 min(s) 47 sec(s)"],
];

function ReservationRow({ n }: { n: number }) {
  const box = "block h-[22px] w-full border border-[#ddd] border-t-[#aaa] bg-white px-1 text-[11px] outline-none";
  return (
    <tr>
      <td className="h-[30px] border border-[#eee] bg-[#dedede] pl-1.5"><Check id={`use-${n}`} label={`Use entry ${n}`} /></td>
      <td className="border border-[#eee] bg-[#dedede] px-0.5"><input aria-label={`Computer name ${n}`} className={box} /></td>
      <td className="border border-[#eee] bg-[#dedede] px-0.5"><input aria-label={`IP address ${n}`} className={box} /></td>
      <td className="border border-[#eee] bg-[#dedede] px-0.5"><input aria-label={`MAC address ${n}`} className={box} /></td>
      <td className="border border-[#eee] bg-[#dedede] pl-0.5">
        <div className="flex items-center gap-1">
          <button type="button" className="h-[22px] w-[22px] rounded-[3px] border border-[#707070] bg-linear-to-b from-[#f4f4f4] to-[#cfcfcf] text-[10px]">&lt;&lt;</button>
          <div className="grid w-[104px] items-center pt-0.5">
            <select aria-label={`Known computers ${n}`} className="col-start-1 row-start-1 h-5 appearance-none border border-[#e4e4e4] border-t-[#aaa] bg-white pl-1 text-[11px] outline-none">
              <option>Computer Name</option>
            </select>
            <Caret c="pointer-events-none col-start-1 row-start-1 mr-1 justify-self-end" />
          </div>
        </div>
      </td>
    </tr>
  );
}

function RouterPage() {
  return (
    <main className="mx-auto flex w-[838px] border-x border-white bg-[#404444] font-['Liberation_Sans',Arial,sans-serif] text-xs leading-[15px] text-black">
      <aside className="flex w-[129px] justify-center">
        <button type="button" className="-mt-[3px] h-[19px] w-12 rounded-[3px] border border-[#8a8a8a] bg-linear-to-b from-[#f6f6f6] to-[#d4d4d4] text-[11px]">Reboot</button>
      </aside>
      <div className="flex w-[570px] flex-col gap-[5px] bg-white px-1.5">
        <Panel title="Router Settings" c="-mt-[7px]">
          <div className="px-2.5 pt-1.5 pb-2">
            <p>
              Use this section to configure the internal network settings of your router. The IP address that is configured here is the IP address that you use to access the Web-based management interface. If you change the IP address here, you may need to adjust your PC's network settings to access the network again.
            </p>
            <div className="-ml-2.5 pt-[15px]">
              <Field id="ip" label="Router IP Address"><input id="ip" defaultValue="192.168.0.1" className={`ml-3 w-[130px] px-0.5 ${inputLook}`} /></Field>
              <Field id="mask" label="Default Subnet Mask"><input id="mask" defaultValue="255.255.255.0" className={`ml-3 w-[130px] px-0.5 ${inputLook}`} /></Field>
              <Field id="domain" label="Local Domain Name"><input id="domain" className={`ml-3 w-[230px] px-0.5 ${inputLook}`} /></Field>
              <Field id="dns" label="Enable DNS Relay"><span className="ml-4"><Check id="dns" on /></span></Field>
            </div>
          </div>
        </Panel>

        <Panel title="DHCP Server Settings">
          <div className="px-2.5 pt-1.5 pb-2.5">
            <p className="pr-3.5">Use this section to configure the built-in DHCP server to assign IP address to the computers on your network.</p>
            <div className="-ml-2.5 pt-3.5">
              <Field id="dhcp" label="Enable DHCP Server"><span className="ml-4"><Check id="dhcp" on /></span></Field>
              <Field id="from" label="DHCP IP Address Range" c="h-[39px] items-center">
                <div className="ml-[3px] flex-1">
                  <div className="flex items-center">
                    <input id="from" defaultValue="100" className={`ml-[9px] w-[45px] px-0.5 ${inputLook}`} />
                    <span className="w-[25px] pl-1 text-center">to</span>
                    <input aria-label="DHCP range end" defaultValue="199" className={`w-[45px] px-0.5 ${inputLook}`} />
                    <span className="ml-1.5">(addresses within the LAN</span>
                  </div>
                  <div>subnet)</div>
                </div>
              </Field>
              <Field id="lease" label="DHCP Lease Time">
                <input id="lease" defaultValue="10080" className={`ml-3 w-[60px] px-0.5 ${inputLook}`} />
                <span className="ml-[3px]">(minutes)</span>
              </Field>
            </div>
          </div>
        </Panel>

        <Panel title="DHCP Client List">
          <div className="px-3 pt-[5px] pb-2.5">
            <table className="text-left">
              <thead>
                <tr className="h-5">
                  <th className="w-[82px] font-normal">Host Name</th>
                  <th className="w-[91px] font-normal">IP Address</th>
                  <th className="w-[121px] font-normal">MAC Address</th>
                  <th className="font-normal">Expired Time</th>
                </tr>
              </thead>
              <tbody>
                {clients.map((row) => (
                  <tr key={row[1]} className="h-[18px]">
                    {row.map((cell, i) => <td key={i} className="whitespace-nowrap">{cell}</td>)}
                  </tr>
                ))}
              </tbody>
            </table>
          </div>
        </Panel>

        <Panel title="25 - DHCP Reservation">
          <div className="px-2.5 pt-5 pb-5">
            <p>Remaining number of clients that can be configured : <span className="text-[#d8001e]">25</span></p>
            <table className="mt-4 ml-0.5 w-[522px] table-fixed border-separate border-spacing-px border border-[#ddd]">
              <thead>
                <tr>
                  <th className="h-5 w-[25px] border border-[#eee] bg-[#dedede]" aria-label="Use" />
                  <th className="w-[111px] border border-[#eee] bg-[#dedede] font-normal">Computer Name</th>
                  <th className="w-[116px] border border-[#eee] bg-[#dedede] font-normal">IP Address</th>
                  <th className="w-[126px] border border-[#eee] bg-[#dedede] font-normal">MAC Address</th>
                  <th className="border border-[#eee] bg-[#dedede]" aria-label="Copy from" />
                </tr>
              </thead>
              <tbody>
                <ReservationRow n={1} />
                <ReservationRow n={2} />
              </tbody>
            </table>
          </div>
        </Panel>
      </div>
      <div className="flex-1" />
    </main>
  );
}

function ScrollBar() {
  return (
    <div className="flex w-[21px] shrink-0 flex-col items-center border-r-2 border-[#dcdcea] bg-[#f0f0f0]">
      <svg className="mt-2 h-1 w-2" viewBox="0 0 8 4" aria-hidden="true"><path d="M0 4H8L4 0Z" fill="#444" /></svg>
      <div className="grow-[133] basis-0" />
      <div className="flex w-[17px] grow-[205] basis-0 flex-col items-center justify-center gap-0.5 rounded-[2px] border border-[#8e8e8e] bg-linear-to-r from-[#f6f6f6] via-[#e2e2e2] to-[#c8c8c8]">
        <span className="h-px w-[7px] bg-[#444]" />
        <span className="h-px w-[7px] bg-[#444]" />
        <span className="h-px w-[7px] bg-[#444]" />
      </div>
      <div className="grow-[291] basis-0" />
      <Caret c="mb-2 text-[#444]" />
    </div>
  );
}

function StatusBar() {
  return (
    <footer className="flex h-[25px] shrink-0 items-center border-t-2 border-[#8c8c8c] bg-[#f0eded] text-xs">
      <div className="ml-auto flex h-full">
        <span className="w-[26px] border-l border-[#d8d5d5]" />
        <span className="w-[26px] border-l border-[#d8d5d5]" />
        <span className="w-[26px] border-l border-[#d8d5d5]" />
        <span className="w-[26px] border-l border-[#d8d5d5]" />
        <span className="w-[26px] border-l border-[#d8d5d5]" />
        <span className="w-[26px] border-l border-[#d8d5d5]" />
      </div>
      <div className="flex h-full w-[410px] items-center gap-1 border-l border-[#d8d5d5] pt-0.5 pl-1">
        <Globe />
        <span className="whitespace-nowrap">Интернет | Защищенный режим: выкл.</span>
      </div>
      <div className="flex h-full w-[108px] items-center border-l border-[#d8d5d5] pt-0.5 pl-2">
        <Icon c="h-3.5 w-3.5">
          <circle cx="6.5" cy="6" r="4.8" fill="#cfe3fa" stroke="#3b74c0" strokeWidth="1.6" />
          <path d="M6.500 3.500v5M4 6h5" stroke="#2a5caa" strokeWidth="1.5" />
          <path d="M10 9.500 15 15" stroke="#a0752f" strokeWidth="2.5" />
        </Icon>
        <span className="ml-0.5">100%</span>
        <Caret c="ml-4" />
        <Icon c="mt-2 mr-0.5 ml-auto h-3 w-3" box="0 0 12 12">
          <path d="M10 1h2v2h-2ZM10 5h2v2h-2ZM10 9h2v2h-2ZM6 5h2v2H6ZM6 9h2v2H6ZM2 9h2v2H2Z" fill="#c9c6c6" />
        </Icon>
      </div>
    </footer>
  );
}

export default function App() {
  return (
    <div className="flex h-screen flex-col overflow-hidden bg-[#f0eded] font-['Noto_Sans',sans-serif] text-xs text-[#10101c]">
      <TitleBar />
      <MenuBar />
      <GossiperBar />
      <DaemonBar />
      <YahooBar />
      <YandexBar />
      <TabBar />
      <div className="flex min-h-0 flex-1 overflow-hidden bg-[#767676]">
        <div className="min-w-0 flex-1 overflow-hidden"><RouterPage /></div>
        <ScrollBar />
      </div>
      <StatusBar />
    </div>
  );
}
